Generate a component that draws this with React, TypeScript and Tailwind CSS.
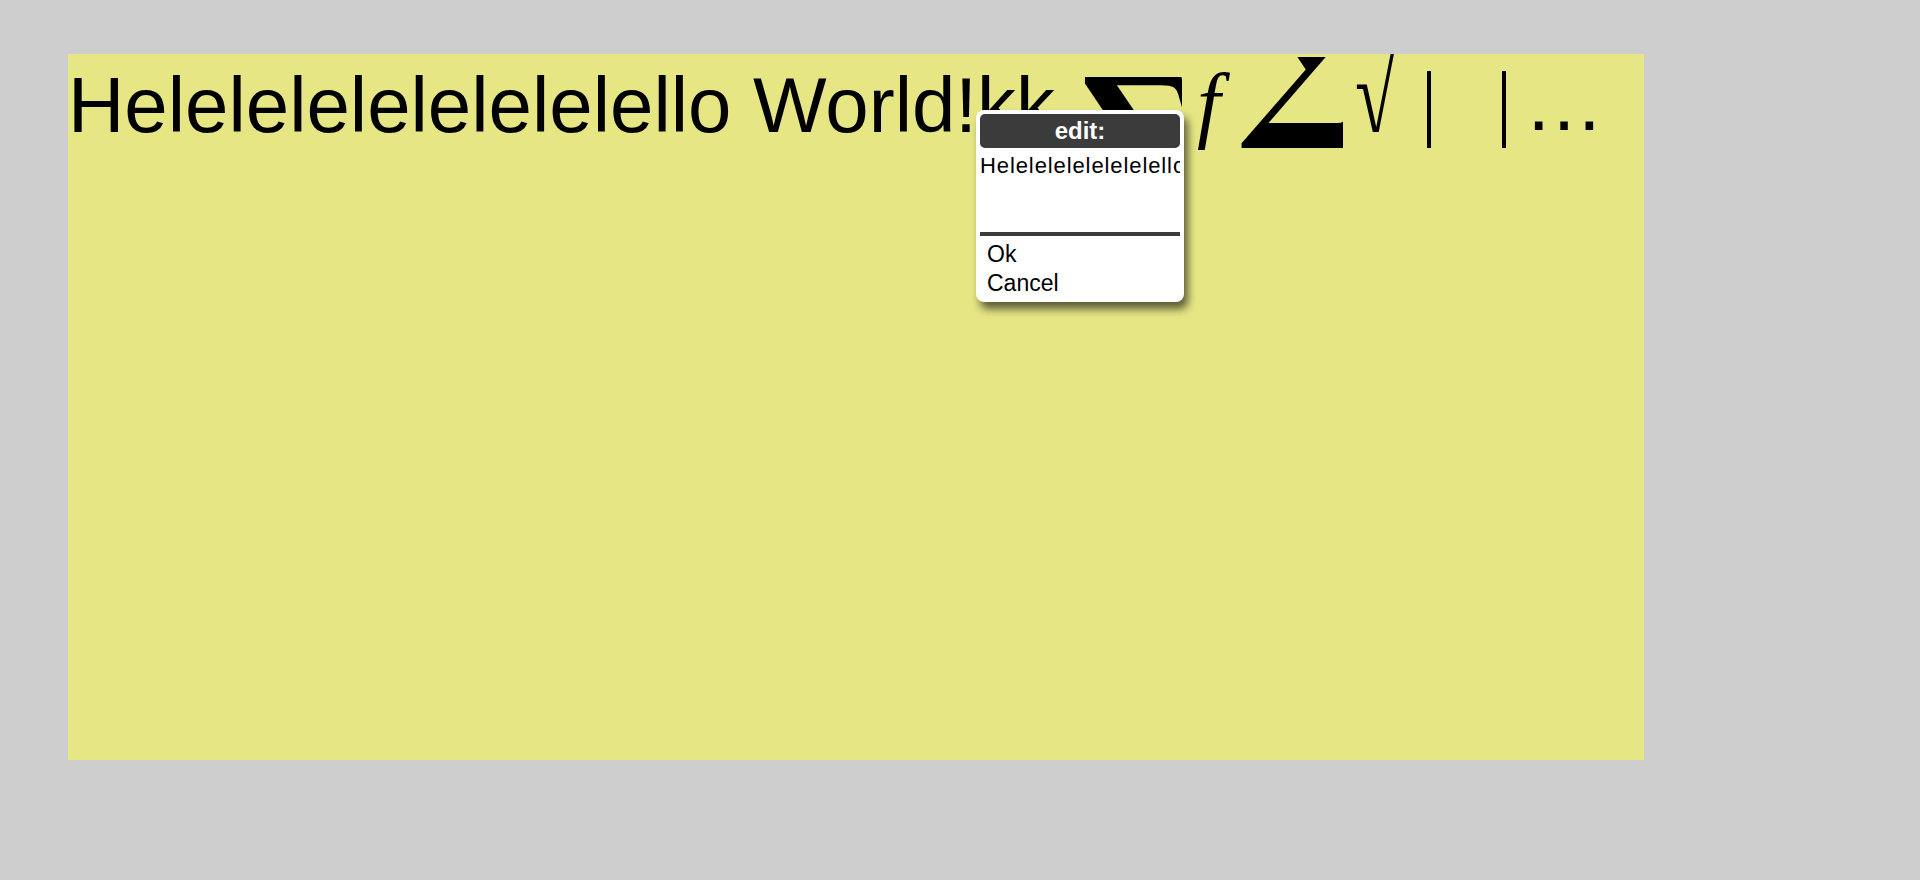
import React from 'react';

const LABEL = 'Helelelelelelelelello';

const EditPopup: React.FC = () => (
    <div className="absolute left-[908px] top-[56px] w-[208px] h-[192px] bg-white rounded-[8px] p-[4px] flex flex-col shadow-[4px_7px_9px_rgba(0,0,0,0.6)] font-['Liberation_Sans',Arial,sans-serif]">
        <div className="h-[34px] bg-[#3b3b3b] rounded-[5px] text-white font-bold text-[24px] leading-[34px] text-center">
            edit:
        </div>
        <div className="h-[84px] overflow-hidden whitespace-nowrap">
            <div className="mt-[7px] text-[22px] leading-none tracking-[0.9px] text-black">{LABEL}</div>
        </div>
        <div className="h-[4px] bg-[#3b3b3b]" />
        <div className="mt-[4px] pl-[7px] text-[23px] leading-[29px] text-black">
            <div>Ok</div>
            <div>Cancel</div>
        </div>
    </div>
);

export default function App() {
    return (
        <div className="min-h-[880px] bg-[#cecece] pt-[54px] pl-[68px]">
            <div className="relative w-[1576px] h-[706px] bg-[#e6e685] overflow-hidden">
                <div className="flex items-start">
                    {/* the label */}
                    <span className="w-[1015px] shrink-0 mt-[12px] text-[78px] leading-none whitespace-nowrap font-['Liberation_Sans',Arial,sans-serif] text-black">
                        {LABEL} World!kk
                    </span>

                    {/* big operator, mostly hidden under the popup */}
                    <div className="w-[99px] h-[60px] shrink-0 mt-[23px] overflow-hidden">
                        <span className="block origin-top scale-y-[1.25] -mt-[26px] text-[160px] leading-none font-bold font-['DejaVu_Serif',serif] text-black">∑</span>
                    </div>

                    <span className="w-[43px] shrink-0 ml-[15px] mt-[8px] text-[84px] leading-none italic font-['Liberation_Serif',serif] text-black">f</span>

                    {/* lower half of the operator */}
                    <div className="w-[103px] h-[91px] shrink-0 mt-[3px] overflow-hidden">
                        <span className="block origin-top scale-y-[1.25] -mt-[115px] text-[160px] leading-none font-bold font-['DejaVu_Serif',serif] text-black">∑</span>
                    </div>

                    <div className="w-[40px] h-[78px] shrink-0 ml-[12px] overflow-hidden">
                        <span className="block origin-top-left scale-x-[0.75] scale-y-[1.18] -mt-[16px] text-[100px] leading-none font-bold font-['Liberation_Serif',serif] text-black">√</span>
                    </div>

                    <div className="w-[4px] h-[77px] shrink-0 ml-[32px] mt-[17px] bg-black" />
                    <div className="w-[4px] h-[77px] shrink-0 ml-[71px] mt-[17px] bg-black" />

                    <span className="shrink-0 ml-[18px] mt-[9px] text-[80px] leading-none font-['Liberation_Sans',Arial,sans-serif] text-black">…</span>
                </div>

                <EditPopup />
            </div>
        </div>
    );
}
